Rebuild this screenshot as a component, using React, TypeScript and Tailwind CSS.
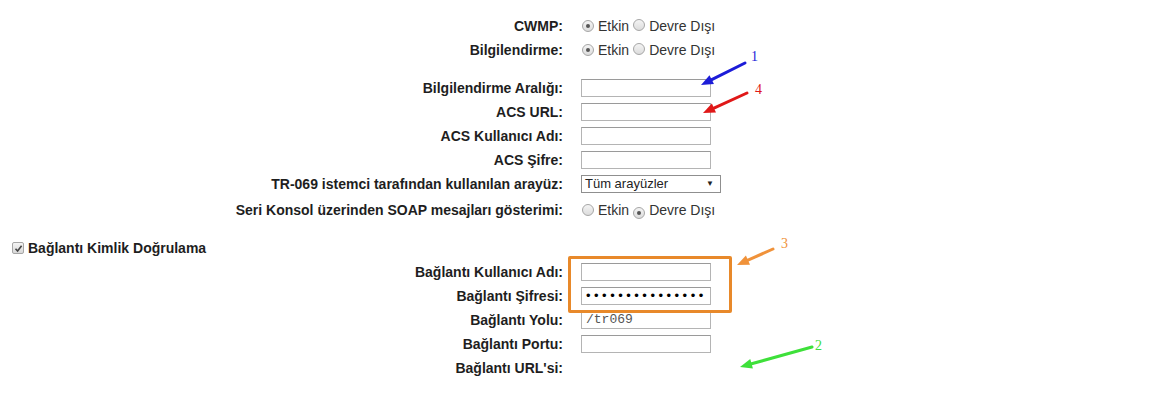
import React from 'react'

const font = { fontFamily: '"Liberation Sans", Arial, sans-serif' }

function Radio({ on }: { on?: boolean }) {
  return (
    <span className="inline-flex h-[12px] w-[12px] items-center justify-center rounded-full border border-[#a6a6a6] bg-gradient-to-b from-[#f4f4f4] to-[#dcdcdc]">
      {on && <span className="h-[4px] w-[4px] rounded-full bg-[#555]" />}
    </span>
  )
}

function Radios({ first }: { first: boolean }) {
  return (
    <div className="ml-[1px] flex items-center text-[14px] text-[#333]">
      <Radio on={first} />
      <span className="ml-[4px]">Etkin</span>
      <span className="ml-[4px]">
        <Radio on={!first} />
      </span>
      <span className="ml-[4px]">Devre Dışı</span>
    </div>
  )
}

function Field({ children, mono }: { children?: React.ReactNode; mono?: boolean }) {
  return (
    <div
      className={
        'flex h-[18px] w-[130px] items-center border border-[#b4b4b4] border-t-[#9a9a9a] bg-white px-[4px] ' +
        (mono ? 'text-[13px] text-[#555]' : '')
      }
      style={mono ? { fontFamily: '"Liberation Mono", "Courier New", monospace' } : undefined}
    >
      {children}
    </div>
  )
}

function Row({ label, children }: { label: string; children?: React.ReactNode }) {
  return (
    <div className="flex h-[24px] items-center">
      <div className="w-[563px] text-right text-[14px] font-bold text-[#1e1e1e]">{label}</div>
      <div className="ml-[18px]">{children}</div>
    </div>
  )
}

function Arrows() {
  const arrow = (x1: number, y1: number, x2: number, y2: number, c: string) => {
    const a = Math.atan2(y2 - y1, x2 - x1)
    const L = 12
    const W = 5
    const bx = x2 - L * Math.cos(a)
    const by = y2 - L * Math.sin(a)
    const px = -Math.sin(a) * W
    const py = Math.cos(a) * W
    return (
      <g>
        <line x1={x1} y1={y1} x2={bx} y2={by} stroke={c} strokeWidth={3} strokeLinecap="round" />
        <polygon points={`${x2},${y2} ${bx + px},${by + py} ${bx - px},${by - py}`} fill={c} />
      </g>
    )
  }
  return (
    <svg className="pointer-events-none absolute left-0 top-0" width={1150} height={393}>
      {arrow(745, 63, 701, 85, '#1c1cd8')}
      {arrow(747, 93, 703, 113, '#e01818')}
      {arrow(773, 249, 737, 265, '#f0923a')}
      {arrow(812, 347, 740, 367, '#3ee03a')}
      <g style={{ fontFamily: '"Liberation Serif", "Times New Roman", serif' }} fontSize={14}>
        <text x={751} y={61} fill="#1c1cd8">1</text>
        <text x={755} y={94} fill="#e01818">4</text>
        <text x={781} y={248} fill="#f0923a">3</text>
        <text x={815} y={350} fill="#3ee03a">2</text>
      </g>
    </svg>
  )
}

export default function App() {
  return (
    <div className="relative h-[393px] w-[1150px] overflow-hidden bg-white" style={font}>
      <div className="flex flex-col pt-[14px]">
        <Row label="CWMP:">
          <Radios first />
        </Row>
        <Row label="Bilgilendirme:">
          <Radios first />
        </Row>
        <div className="h-[14px]" />
        <Row label="Bilgilendirme Aralığı:">
          <Field />
        </Row>
        <Row label="ACS URL:">
          <Field />
        </Row>
        <Row label="ACS Kullanıcı Adı:">
          <Field />
        </Row>
        <Row label="ACS Şifre:">
          <Field />
        </Row>
        <Row label="TR-069 istemci tarafından kullanılan arayüz:">
          <div className="flex h-[18px] w-[140px] items-center justify-between border border-[#8f8f8f] bg-white pl-[3px] pr-[6px] text-[13px] text-[#222]">
            <span>Tüm arayüzler</span>
            <span className="text-[8px]">▼</span>
          </div>
        </Row>
        <div className="h-[2px]" />
        <Row label="Seri Konsol üzerinden SOAP mesajları gösterimi:">
          <Radios first={false} />
        </Row>
        <div className="h-[14px]" />
        <div className="flex h-[24px] items-center pl-[12px]">
          <span className="flex h-[12px] w-[12px] items-center justify-center rounded-[2px] border border-[#a6a6a6] bg-gradient-to-b from-[#f4f4f4] to-[#d8d8d8]">
            <svg width="9" height="9" viewBox="0 0 9 9">
              <path d="M1.5 4.8 L3.6 7 L7.6 1.8" fill="none" stroke="#444" strokeWidth="1.6" />
            </svg>
          </span>
          <span className="ml-[4px] text-[14px] font-bold text-[#1e1e1e]">Bağlantı Kimlik Doğrulama</span>
        </div>
        <Row label="Bağlantı Kullanıcı Adı:">
          <Field />
        </Row>
        <Row label="Bağlantı Şifresi:">
          <Field>
            <span className="text-[13px] tracking-[3.5px] text-black">•••••••••••••••</span>
          </Field>
        </Row>
        <Row label="Bağlantı Yolu:">
          <Field mono>/tr069</Field>
        </Row>
        <Row label="Bağlantı Portu:">
          <Field />
        </Row>
        <Row label="Bağlantı URL'si:" />
      </div>
      <div className="pointer-events-none absolute left-[568px] top-[256px] h-[57px] w-[164px] rounded-[2px] border-[3px] border-[#e8892a]" />
      <Arrows />
    </div>
  )
}
